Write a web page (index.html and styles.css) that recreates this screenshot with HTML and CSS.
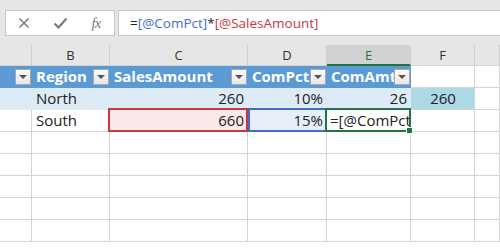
FILE: index.html
```html
<!DOCTYPE html>
<html>
    <head>
        <meta charset="utf-8">
        <title>Sheet</title>
        <link rel="stylesheet" href="styles.css">
    </head>
    <body>
        <div class="topbar">
            <div class="namebox">
                <span class="tool">
                    <svg width="12" height="12" viewBox="0 0 12 12"><path d="M1.5 1.5 L10.5 10.5 M10.5 1.5 L1.5 10.5" stroke="#7b7b7b" stroke-width="1.6" fill="none"/></svg>
                </span>
                <span class="tool">
                    <svg width="15" height="12" viewBox="0 0 15 12"><path d="M1.5 6.5 L5.5 10.5 L13.5 1.5" stroke="#7b7b7b" stroke-width="2.2" fill="none"/></svg>
                </span>
                <span class="tool fx">fx</span>
            </div>
            <div class="formula">=<span class="ref-blue">[@ComPct]</span>*<span class="ref-red">[@SalesAmount]</span></div>
        </div>

        <div class="sheet">
            <div class="colhead"></div>
            <div class="colhead">B</div>
            <div class="colhead">C</div>
            <div class="colhead">D</div>
            <div class="colhead active">E</div>
            <div class="colhead">F</div>
            <div class="colhead"></div>

            <div class="cell th"><span class="dd"></span></div>
            <div class="cell th">Region<span class="dd"></span></div>
            <div class="cell th">SalesAmount<span class="dd"></span></div>
            <div class="cell th">ComPct<span class="dd"></span></div>
            <div class="cell th">ComAmt<span class="dd"></span></div>
            <div class="cell"></div>
            <div class="cell"></div>

            <div class="cell band"></div>
            <div class="cell band">North</div>
            <div class="cell band num">260</div>
            <div class="cell band num">10%</div>
            <div class="cell band num">26</div>
            <div class="cell spill">260</div>
            <div class="cell"></div>

            <div class="cell"></div>
            <div class="cell">South</div>
            <div class="cell num red-ref">660</div>
            <div class="cell num blue-ref">15%</div>
            <div class="cell editing">=[@ComPct<span class="handle"></span></div>
            <div class="cell"></div>
            <div class="cell"></div>

            <div class="cell"></div><div class="cell"></div><div class="cell"></div><div class="cell"></div><div class="cell"></div><div class="cell"></div><div class="cell"></div>
            <div class="cell"></div><div class="cell"></div><div class="cell"></div><div class="cell"></div><div class="cell"></div><div class="cell"></div><div class="cell"></div>
            <div class="cell"></div><div class="cell"></div><div class="cell"></div><div class="cell"></div><div class="cell"></div><div class="cell"></div><div class="cell"></div>
            <div class="cell"></div><div class="cell"></div><div class="cell"></div><div class="cell"></div><div class="cell"></div><div class="cell"></div><div class="cell"></div>
            <div class="cell"></div><div class="cell"></div><div class="cell"></div><div class="cell"></div><div class="cell"></div><div class="cell"></div><div class="cell"></div>
        </div>
    </body>
</html>
```

FILE: styles.css
```css
body {
    margin: 0;
    width: 500px;
    height: 250px;
    overflow: hidden;
    background: #fff;
    font-family: "Open Sans", "Noto Sans", sans-serif;
}

.topbar {
    height: 45px;
    box-sizing: border-box;
    padding: 10px 0 0 5px;
    background: #e6e6e6;
    display: flex;
    gap: 3px;
}
.namebox {
    width: 110px;
    height: 26px;
    box-sizing: border-box;
    border: 1px solid #c6c6c6;
    background: #fff;
    display: flex;
}
.tool {
    width: 36px;
    display: flex;
    align-items: center;
    justify-content: center;
}
.fx {
    font-family: "Liberation Serif", serif;
    font-style: italic;
    font-size: 15px;
    color: #7b7b7b;
    letter-spacing: -1px;
}
.formula {
    flex: 1;
    height: 26px;
    box-sizing: border-box;
    border: 1px solid #c6c6c6;
    border-right: none;
    background: #fff;
    padding-left: 11px;
    font-size: 13.5px;
    line-height: 24px;
    color: #222;
}
.ref-blue { color: #3d6fc9; }
.ref-red { color: #c5393f; }

.sheet {
    height: 205px;
    overflow: hidden;
    display: grid;
    grid-template-columns: 32px 78px 138px 79px 84px 64px 1fr;
    grid-template-rows: 21px;
    grid-auto-rows: 22px;
}
.colhead {
    box-sizing: border-box;
    background: #e6e6e6;
    border-right: 1px solid #cfcfcf;
    border-bottom: 1px solid #d4d4d4;
    font-size: 13px;
    color: #333;
    text-align: center;
    line-height: 20px;
}
.colhead.active {
    background: #d2d2d2;
    color: #217346;
    border-bottom: 2px solid #217346;
}

.cell {
    position: relative;
    box-sizing: border-box;
    border-right: 1px solid #d4d4d4;
    border-bottom: 1px solid #d4d4d4;
    font-size: 15px;
    line-height: 21px;
    color: #222;
    padding: 0 3px 0 4px;
    white-space: nowrap;
    overflow: hidden;
}
.num { text-align: right; }

.th {
    background: #5b9bd5;
    border-color: #5b9bd5;
    color: #fff;
    font-weight: bold;
    overflow: visible;
}
.th:nth-child(12) { overflow: hidden; }
.dd {
    position: absolute;
    right: 0;
    top: 3px;
    width: 16px;
    height: 16px;
    box-sizing: border-box;
    border: 1px solid #a9a9a9;
    background: linear-gradient(#fdfdfd, #e6e6e6);
}
.dd::after {
    content: "";
    position: absolute;
    left: 3px;
    top: 5px;
    border-left: 4px solid transparent;
    border-right: 4px solid transparent;
    border-top: 4px solid #555;
}

.band {
    background: #ddebf7;
    border-color: #ddebf7;
}
.spill {
    background: #add8e6;
    text-align: center;
}

.red-ref {
    background: #fbe8e8;
    overflow: visible;
}
.red-ref::after {
    content: "";
    position: absolute;
    top: -2px;
    left: -2px;
    right: -1px;
    bottom: -1px;
    border: 2px solid #c5393f;
    z-index: 2;
}
.blue-ref {
    background: #e6eef9;
    overflow: visible;
}
.blue-ref::after {
    content: "";
    position: absolute;
    top: -2px;
    left: 0;
    right: -1px;
    bottom: -1px;
    border: 2px solid #3d6fc9;
    z-index: 2;
}
.editing {
    overflow: visible;
    padding-left: 3px;
}
.editing::after {
    content: "";
    position: absolute;
    top: -2px;
    left: -2px;
    right: -1px;
    bottom: -1px;
    border: 2px solid #217346;
    z-index: 3;
}
.handle {
    position: absolute;
    right: -3px;
    bottom: -3px;
    width: 5px;
    height: 5px;
    background: #217346;
    border: 1px solid #fff;
    z-index: 4;
}
```
